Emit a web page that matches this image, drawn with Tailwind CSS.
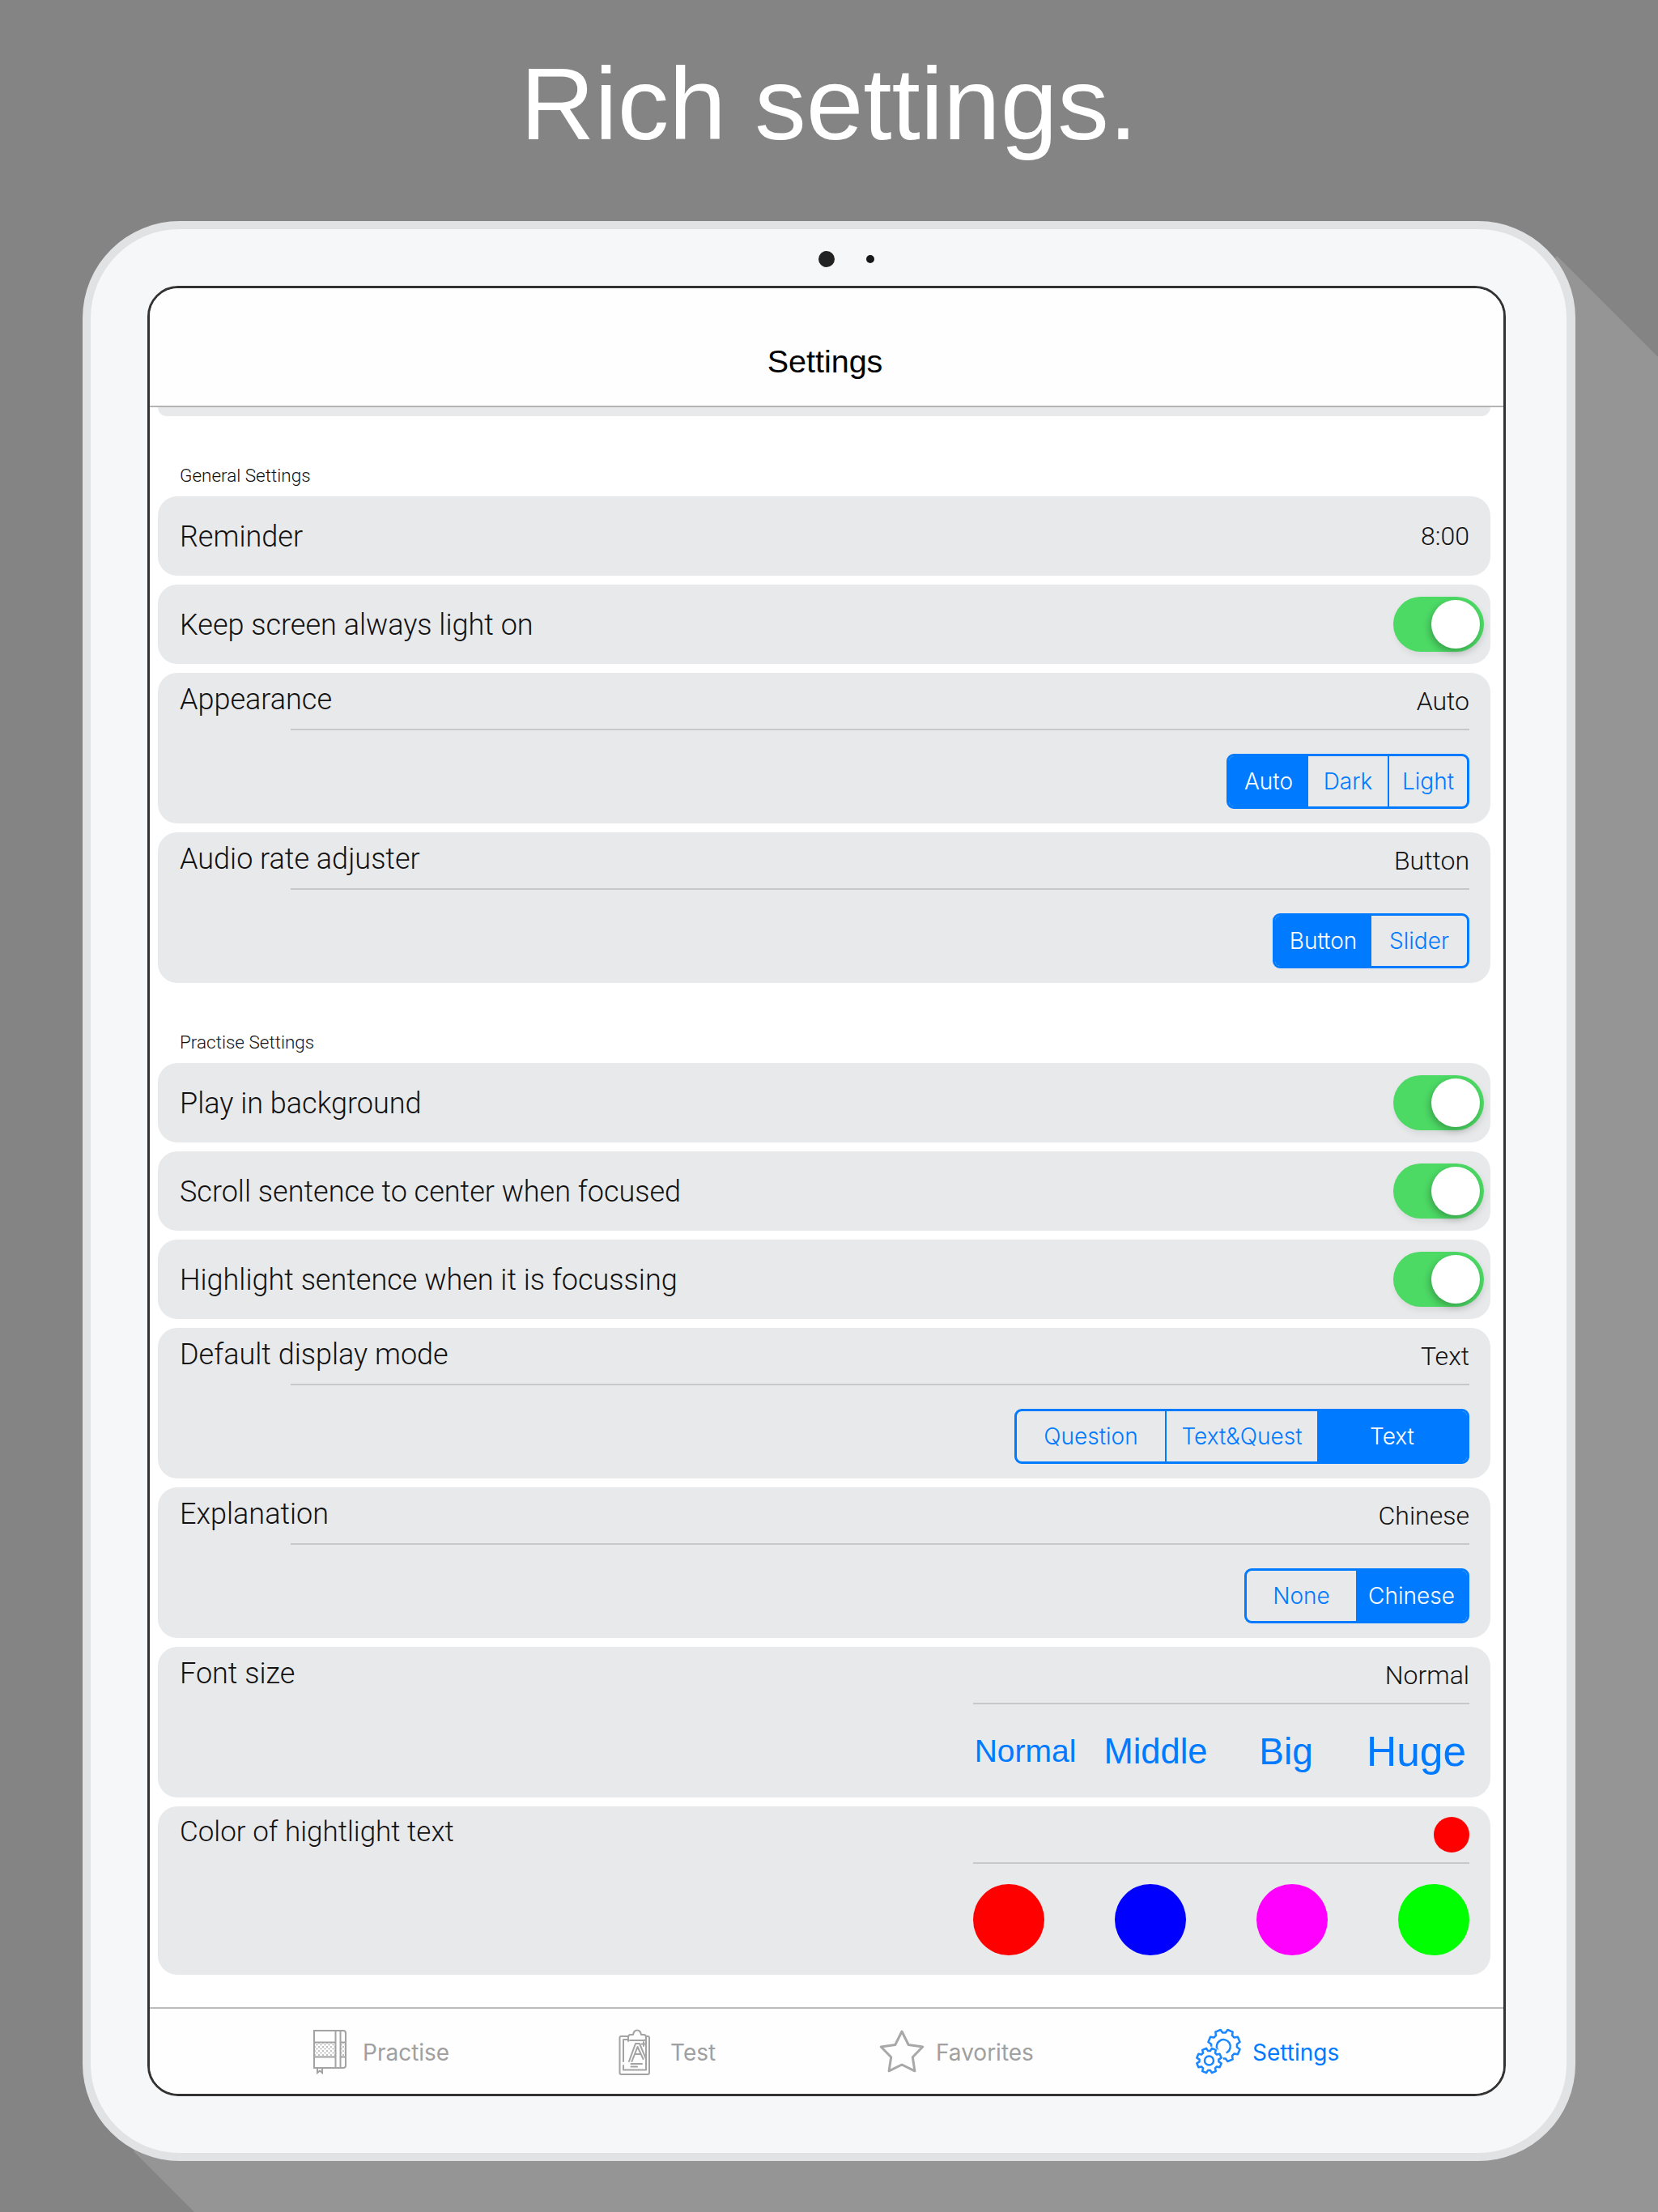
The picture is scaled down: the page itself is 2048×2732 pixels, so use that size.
<!DOCTYPE html>
<html lang="en">
<head>
<meta charset="UTF-8">
<title>Rich settings</title>
<script src="https://cdn.jsdelivr.net/npm/@tailwindcss/browser@4"></script>
</head>
<body class="relative w-[2048px] h-[2732px] overflow-hidden bg-[#848484] [font-family:'Liberation_Sans',sans-serif]">
  <!-- long flat shadow behind the device -->
  <svg class="absolute inset-0" width="2048" height="2732"><polygon points="1923,316 2048,441 2048,2732 240,2732 165,2657" fill="#959595"/></svg>

  <div class="relative flex flex-col">
    <h1 class="h-[273px] pb-[17px] flex items-center justify-center text-white text-[127px] font-normal">Rich settings.</h1>

    <!-- device -->
    <div class="ml-[102px] w-[1844px] h-[2396px] bg-[#f6f7f9] border-[#e1e2e4] border-[10px] border-r-[11px] rounded-[120px] pl-[70px] pt-[70px] relative">
      <div class="absolute left-[899px] top-[27px] w-5 h-5 rounded-full bg-[#222]"></div>
      <div class="absolute left-[958px] top-[32px] w-2.5 h-2.5 rounded-full bg-[#18181c]"></div>

      <div class="w-[1678px] h-[2236px] bg-white border-[3px] border-[#333] rounded-[38px] overflow-hidden flex flex-col">
        <div class="h-[147px] shrink-0 bg-[#fefefe] border-b-2 border-[#b4b4b4] flex items-center justify-center pt-[37px] pr-[4px] text-[39.500px] text-black">Settings</div>

        <!-- settings list -->
        <div class="flex-1 overflow-hidden pl-[10px] pr-[16px] text-[#111] font-light [font-family:Roboto,sans-serif]">
          <div class="h-[11px] bg-[#e8e9eb] rounded-b-[22px]"></div>

          <div class="h-[99px] pl-[27px] pt-[58px] text-[22.500px] leading-[30px] text-[#111]">General Settings</div>
          <div class="flex flex-col gap-[11px]">
            <div class="h-[98px] bg-[#e8e9eb] rounded-[24px] flex items-center justify-between pl-[27px] pr-[26px]">
              <span class="text-[36px] mt-[2px]">Reminder</span><span class="text-[32px]">8:00</span>
            </div>
            <div class="h-[98px] bg-[#e8e9eb] rounded-[24px] flex items-center justify-between pl-[27px] pr-[8px]">
              <span class="text-[36px] mt-[2px]">Keep screen always light on</span>
              <div class="w-[112px] h-[68px] rounded-full bg-[#4cd964] flex items-center justify-end pr-[5px] shadow-[2px_4px_8px_rgba(0,0,0,0.08)]"><div class="w-[60px] h-[60px] rounded-full bg-white shadow-[-2px_4px_8px_rgba(0,0,0,0.25)]"></div></div>
            </div>
            <div class="h-[186px] bg-[#e8e9eb] rounded-[24px] pr-[26px] flex flex-col">
              <div class="h-[69px] flex justify-between items-center pl-[27px]">
                <span class="text-[36px] -mt-[4px]">Appearance</span><span class="text-[32px]">Auto</span>
              </div>
              <div class="h-[2px] ml-[164px] bg-[#c8c8ca]"></div>
              <div class="mt-[29px] self-end flex h-[68px] border-[3px] border-[#007aff] rounded-[9px] overflow-hidden text-[#007aff] text-[28px] font-light [font-family:Inter,sans-serif]">
                <span class="w-[98px] bg-[#007aff] text-white flex items-center justify-center">Auto</span>
                <span class="w-[100px] border-r-2 border-[#007aff] flex items-center justify-center">Dark</span>
                <span class="w-[96px] flex items-center justify-center">Light</span>
              </div>
            </div>
            <div class="h-[186px] bg-[#e8e9eb] rounded-[24px] pr-[26px] flex flex-col">
              <div class="h-[69px] flex justify-between items-center pl-[27px]">
                <span class="text-[36px] -mt-[4px]">Audio rate adjuster</span><span class="text-[32px]">Button</span>
              </div>
              <div class="h-[2px] ml-[164px] bg-[#c8c8ca]"></div>
              <div class="mt-[29px] self-end flex h-[68px] border-[3px] border-[#007aff] rounded-[9px] overflow-hidden text-[#007aff] text-[28px] font-light [font-family:Inter,sans-serif]">
                <span class="w-[119px] bg-[#007aff] text-white flex items-center justify-center">Button</span>
                <span class="w-[118px] flex items-center justify-center">Slider</span>
              </div>
            </div>
          </div>

          <div class="h-[99px] pl-[27px] pt-[58px] text-[22.500px] leading-[30px] text-[#111]">Practise Settings</div>
          <div class="flex flex-col gap-[11px]">
            <div class="h-[98px] bg-[#e8e9eb] rounded-[24px] flex items-center justify-between pl-[27px] pr-[8px]">
              <span class="text-[36px] mt-[2px]">Play in background</span>
              <div class="w-[112px] h-[68px] rounded-full bg-[#4cd964] flex items-center justify-end pr-[5px] shadow-[2px_4px_8px_rgba(0,0,0,0.08)]"><div class="w-[60px] h-[60px] rounded-full bg-white shadow-[-2px_4px_8px_rgba(0,0,0,0.25)]"></div></div>
            </div>
            <div class="h-[98px] bg-[#e8e9eb] rounded-[24px] flex items-center justify-between pl-[27px] pr-[8px]">
              <span class="text-[36px] mt-[2px]">Scroll sentence to center when focused</span>
              <div class="w-[112px] h-[68px] rounded-full bg-[#4cd964] flex items-center justify-end pr-[5px] shadow-[2px_4px_8px_rgba(0,0,0,0.08)]"><div class="w-[60px] h-[60px] rounded-full bg-white shadow-[-2px_4px_8px_rgba(0,0,0,0.25)]"></div></div>
            </div>
            <div class="h-[98px] bg-[#e8e9eb] rounded-[24px] flex items-center justify-between pl-[27px] pr-[8px]">
              <span class="text-[36px] mt-[2px]">Highlight sentence when it is focussing</span>
              <div class="w-[112px] h-[68px] rounded-full bg-[#4cd964] flex items-center justify-end pr-[5px] shadow-[2px_4px_8px_rgba(0,0,0,0.08)]"><div class="w-[60px] h-[60px] rounded-full bg-white shadow-[-2px_4px_8px_rgba(0,0,0,0.25)]"></div></div>
            </div>
            <div class="h-[186px] bg-[#e8e9eb] rounded-[24px] pr-[26px] flex flex-col">
              <div class="h-[69px] flex justify-between items-center pl-[27px]">
                <span class="text-[36px] -mt-[4px]">Default display mode</span><span class="text-[32px]">Text</span>
              </div>
              <div class="h-[2px] ml-[164px] bg-[#c8c8ca]"></div>
              <div class="mt-[29px] self-end flex h-[68px] border-[3px] border-[#007aff] rounded-[9px] overflow-hidden text-[#007aff] text-[28px] font-light [font-family:Inter,sans-serif]">
                <span class="w-[185px] border-r-2 border-[#007aff] flex items-center justify-center">Question</span>
                <span class="w-[186px] flex items-center justify-center">Text&amp;Quest</span>
                <span class="w-[185px] bg-[#007aff] text-white flex items-center justify-center">Text</span>
              </div>
            </div>
            <div class="h-[186px] bg-[#e8e9eb] rounded-[24px] pr-[26px] flex flex-col">
              <div class="h-[69px] flex justify-between items-center pl-[27px]">
                <span class="text-[36px] -mt-[4px]">Explanation</span><span class="text-[32px]">Chinese</span>
              </div>
              <div class="h-[2px] ml-[164px] bg-[#c8c8ca]"></div>
              <div class="mt-[29px] self-end flex h-[68px] border-[3px] border-[#007aff] rounded-[9px] overflow-hidden text-[#007aff] text-[28px] font-light [font-family:Inter,sans-serif]">
                <span class="w-[135px] flex items-center justify-center">None</span>
                <span class="w-[137px] bg-[#007aff] text-white flex items-center justify-center">Chinese</span>
              </div>
            </div>
            <div class="h-[186px] bg-[#e8e9eb] rounded-[24px] pr-[26px] flex flex-col">
              <div class="h-[69px] flex justify-between items-center pl-[27px]">
                <span class="text-[36px] -mt-[4px]">Font size</span><span class="text-[32px]">Normal</span>
              </div>
              <div class="h-[2px] ml-[1007px] bg-[#c8c8ca]"></div>
              <div class="self-end -mr-[15px] w-[644px] h-[113px] pt-[4px] grid grid-cols-4 items-center text-center text-[#007aff] font-normal [font-family:'Liberation_Sans',sans-serif]">
                <span class="text-[39px]">Normal</span>
                <span class="text-[43.500px]">Middle</span>
                <span class="text-[46px]">Big</span>
                <span class="text-[51.500px]">Huge</span>
              </div>
            </div>
            <div class="h-[208px] bg-[#e8e9eb] rounded-[24px] pr-[26px] flex flex-col">
              <div class="h-[69px] flex justify-between items-center pl-[27px]">
                <span class="text-[35px] -mt-[4px]">Color of hightlight text</span><span class="w-[44px] h-[44px] rounded-full bg-[#ff0000]"></span>
              </div>
              <div class="h-[2px] ml-[1007px] bg-[#c8c8ca]"></div>
              <div class="mt-[25px] ml-[1007px] flex justify-between">
                <span class="w-[88px] h-[88px] rounded-full bg-[#ff0000]"></span>
                <span class="w-[88px] h-[88px] rounded-full bg-[#0000ff]"></span>
                <span class="w-[88px] h-[88px] rounded-full bg-[#ff00ff]"></span>
                <span class="w-[88px] h-[88px] rounded-full bg-[#00ff00]"></span>
              </div>
            </div>
          </div>
        </div>

        <!-- tab bar -->
        <div class="h-[107px] shrink-0 bg-[#fefefe] border-t-2 border-[#bcbcbc] pl-[190px] flex items-center text-[28px] text-[#a0a0a0] [font-family:Inter,sans-serif]">
          <div class="w-[380px] shrink-0 flex items-center">
            <svg width="70" height="70" viewBox="0 0 70 70" fill="none" stroke="#a3a3a3" stroke-width="2">
              <defs><pattern id="dots" width="5" height="5" patternUnits="userSpaceOnUse"><circle cx="1.500" cy="1.500" r="1.100" fill="#b5b5b5" stroke="none"/><circle cx="4" cy="4" r="1.100" fill="#b5b5b5" stroke="none"/></pattern></defs>
              <rect x="13" y="23" width="26" height="18" fill="url(#dots)" stroke="none"/>
              <rect x="46" y="23" width="5" height="18" fill="url(#dots)" stroke="none"/>
              <path d="M13 9H49Q52 9 52 12V52Q52 55 49 55H13Z"/>
              <path d="M39.500 9V55M45.500 9V55M13 23.500H39.500M13 41.500H39.500M45.500 23.500H52M45.500 41.500H52"/>
              <path d="M17 55V61L20 58.500L23 61V55"/>
            </svg>
            <span class="ml-[3px] mt-[2px]">Practise</span>
          </div>
          <div class="w-[330px] shrink-0 flex items-center">
            <svg width="70" height="70" viewBox="0 0 70 70" fill="none" stroke="#a3a3a3" stroke-width="2" stroke-linecap="round" stroke-linejoin="round">
              <path d="M21 16H12Q10.500 16 10.500 18V61Q10.500 63 12.500 63H45Q47 63 47 61V18Q47 16 45 16H43"/>
              <path d="M43 20V57.500H15V52M15 47V20H21"/>
              <path d="M21 22V17Q21 14 24 14H27Q28 8.500 32 8.500Q36 8.500 37 14H40Q43 14 43 17V19Q43 21 40 21H23"/>
              <path d="M22 47L30 25H35L43 44M25.500 47L32.500 29L39.500 44M29 38H36"/>
              <path d="M40 23V28M37.500 25.500H42.500"/>
              <path d="M24.500 50H38M24.500 53.500H32"/>
            </svg>
            <span class="ml-[3px] mt-[2px]">Test</span>
          </div>
          <div class="w-[385px] shrink-0 flex items-center">
            <svg width="60" height="56" viewBox="0 0 60 56" fill="none" stroke="#a8a8a8" stroke-width="3" stroke-linejoin="round">
              <path d="M29 3L37.200 19.500L54.700 22L42.300 34.800L44.900 51.800L29 44L13.100 51.800L15.700 34.800L3.300 22L20.800 19.500Z"/>
            </svg>
            <span class="ml-[11px] mt-[2px]">Favorites</span>
          </div>
          <div class="shrink-0 flex items-center text-[#007aff]">
            <svg width="70" height="70" viewBox="0 0 70 70" fill="none" stroke="#1a86ff" stroke-width="2.500" stroke-linejoin="round" stroke-linecap="round">
              <path id="gear-big"/>
              <path d="M34 33A8.500 8.500 0 1 1 45.500 36"/>
              <circle cx="23.500" cy="46" r="15.500" fill="#fefefe" stroke="#fefefe" stroke-width="4"/>
              <path id="gear-small"/>
              <circle cx="23.500" cy="46" r="5.500"/>
            </svg>
            <span class="ml-[7px] mt-[2px]">Settings</span>
          </div>
        </div>
      </div>
    </div>
  </div>

  <script>
    // cog outlines: 8 teeth round a centre
    function cog(cx, cy, outer, inner) {
      let d = '';
      for (let i = 0; i < 8; i++) {
        const a = i * Math.PI / 4 + Math.PI / 8;
        const pts = [[inner, -0.28], [outer, -0.17], [outer, 0.17], [inner, 0.28]];
        pts.forEach(function (p, j) {
          const x = cx + p[0] * Math.cos(a + p[1]);
          const y = cy + p[0] * Math.sin(a + p[1]);
          d += ((i === 0 && j === 0) ? 'M' : 'L') + x.toFixed(2) + ' ' + y.toFixed(2);
        });
      }
      return d + 'Z';
    }
    document.getElementById('gear-big').setAttribute('d', cog(42, 27.5, 20, 16));
    document.getElementById('gear-small').setAttribute('d', cog(23.5, 46, 15.5, 12));
  </script>
</body>
</html>
